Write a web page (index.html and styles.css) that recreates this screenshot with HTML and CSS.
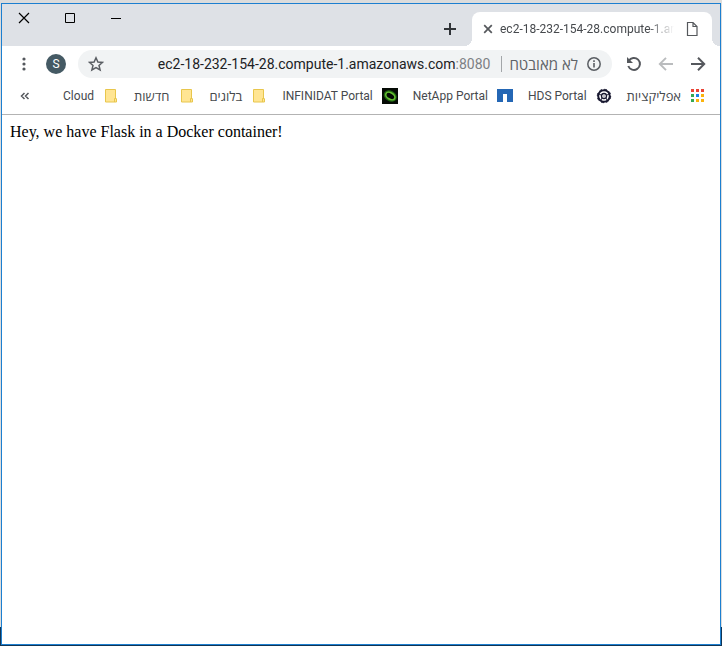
FILE: index.html
```html
<!DOCTYPE html>
<html lang="en">
<head>
<meta charset="utf-8">
<title>ec2-18-232-154-28.compute-1.amazonaws.com:8080</title>
<link rel="stylesheet" href="styles.css">
</head>
<body>
<div class="window">
  <header class="titlebar">
    <div class="window-controls">
      <button type="button" aria-label="Close"><svg width="12" height="12" viewBox="0 0 12 12"><path d="M1 1l10 10M11 1L1 11" stroke="#000" stroke-width="1.2"/></svg></button>
      <button type="button" aria-label="Maximize"><svg width="12" height="12" viewBox="0 0 12 12"><path d="M1.5 1.5h9v9h-9z" fill="none" stroke="#000"/></svg></button>
      <button type="button" aria-label="Minimize"><svg width="12" height="12" viewBox="0 0 12 12"><path d="M1 6.5h10" stroke="#000"/></svg></button>
    </div>
    <div class="tabs">
      <button type="button" class="new-tab" aria-label="New tab"><svg width="14" height="14" viewBox="0 0 14 14"><path d="M7 1v12M1 7h12" stroke="#303438" stroke-width="2"/></svg></button>
      <div class="tab">
        <button type="button" class="tab-close" aria-label="Close tab"><svg width="10" height="10" viewBox="0 0 10 10"><path d="M1.200 1.200l7.600 7.600M8.800 1.200l-7.600 7.600" stroke="#55585c" stroke-width="1.7"/></svg></button>
        <span class="tab-title">ec2-18-232-154-28.compute-1.amazonaws.com</span>
        <svg width="12" height="16" viewBox="0 0 12 16"><path d="M1.5 1.5h5.500l4 4v9h-9.500zM7 1.500v4h4" fill="none" stroke="#55585c" stroke-width="1.200"/></svg>
      </div>
    </div>
  </header>
  <nav class="toolbar">
    <button type="button" class="tool menu" aria-label="Menu"><svg width="4" height="14" viewBox="0 0 4 14" fill="#55585d"><circle cx="2" cy="2" r="1.600"/><circle cx="2" cy="7" r="1.600"/><circle cx="2" cy="12" r="1.600"/></svg></button>
    <button type="button" class="avatar" aria-label="Profile">S</button>
    <div class="omnibox">
      <button type="button" class="tool" aria-label="Bookmark this page"><svg width="16" height="16" viewBox="0 0 16 16"><path d="M8 1.800l1.900 4.200 4.600.4-3.500 3 1.100 4.500L8 11.500l-4.100 2.400L5 9.400l-3.500-3 4.600-.4z" fill="none" stroke="#5a5e63" stroke-width="1.500"/></svg></button>
      <input class="host" type="text" aria-label="Address" value="ec2-18-232-154-28.compute-1.amazonaws.com"><span class="port">:8080</span>
      <span class="divider"></span>
      <span class="security" lang="he" dir="rtl">לא מאובטח</span>
      <button type="button" class="tool" aria-label="Site information"><svg width="16" height="16" viewBox="0 0 16 16"><circle cx="8" cy="8" r="6.200" fill="none" stroke="#5a5e63" stroke-width="1.500"/><path d="M8 7v4.500M8 4.300v1.600" stroke="#5a5e63" stroke-width="1.600"/></svg></button>
    </div>
    <div class="navigation">
      <button type="button" class="tool" aria-label="Reload"><svg width="16" height="16" viewBox="0 0 16 16"><path d="M2.800 4.800A6 6 0 1 1 2.300 10" fill="none" stroke="#55585d" stroke-width="2"/><path d="M1 1v6h6z" fill="#55585d"/></svg></button>
      <button type="button" class="tool" aria-label="Forward" disabled><svg width="16" height="16" viewBox="0 0 16 16"><path d="M15 8H2.500M8 1.800L1.800 8 8 14.200" fill="none" stroke="#babcbe" stroke-width="1.900"/></svg></button>
      <button type="button" class="tool" aria-label="Back"><svg width="16" height="16" viewBox="0 0 16 16"><path d="M1 8h12.500M8 1.800L14.200 8 8 14.200" fill="none" stroke="#55585d" stroke-width="2"/></svg></button>
    </div>
  </nav>
  <nav class="bookmarks">
    <button type="button" class="tool more" aria-label="More bookmarks"><svg width="10" height="8" viewBox="0 0 10 8"><path d="M4.500 1L1.500 4l3 3M8.500 1l-3 3 3 3" fill="none" stroke="#55585d" stroke-width="1.500"/></svg></button>
    <a href="#">Cloud <svg width="16" height="16" viewBox="0 0 16 16"><path d="M2.500 1.500h10v9l1 .5v3h-11z" fill="#ffe593" stroke="#e8c64c"/><path d="M11.500 14v-3.500h2" fill="none" stroke="#e8c64c"/></svg></a>
    <a href="#" lang="he">חדשות <svg width="16" height="16" viewBox="0 0 16 16"><path d="M2.500 1.500h10v9l1 .5v3h-11z" fill="#ffe593" stroke="#e8c64c"/><path d="M11.500 14v-3.500h2" fill="none" stroke="#e8c64c"/></svg></a>
    <a href="#" lang="he">בלוגים <svg width="16" height="16" viewBox="0 0 16 16"><path d="M2.500 1.500h10v9l1 .5v3h-11z" fill="#ffe593" stroke="#e8c64c"/><path d="M11.500 14v-3.500h2" fill="none" stroke="#e8c64c"/></svg></a>
    <a href="#">INFINIDAT Portal <svg width="16" height="16" viewBox="0 0 16 16"><path d="M0 0h16v16H0z" fill="#050a05"/><ellipse cx="8.300" cy="8" rx="5.600" ry="3.900" transform="rotate(30 8.300 8)" fill="none" stroke="#1f6512" stroke-width="2.600"/><ellipse cx="8.300" cy="8" rx="5" ry="3.200" transform="rotate(30 8.300 8)" fill="none" stroke="#67bf32" stroke-width="1.500"/></svg></a>
    <a href="#">NetApp Portal <svg width="16" height="16" viewBox="0 0 16 16"><path d="M0 1h16v13h-6V6H6v8H0z" fill="#2467b5"/></svg></a>
    <a href="#">HDS Portal <svg width="16" height="16" viewBox="0 0 16 16" fill="none" stroke="#17172f"><circle cx="8" cy="8" r="5.800" stroke-width="2"/><circle cx="8" cy="8" r="6.700" stroke-width="1" stroke-dasharray="3 2.260"/><circle cx="8" cy="8" r="2.500" stroke-width="1.300"/><path d="M8 7.500v1M5 12l1-2M11 12l-1-2M3 6l2 1M13 6l-2 1"/></svg></a>
    <a href="#" lang="he">אפליקציות <svg width="16" height="16" viewBox="0 0 16 16"><path d="M1 1h3v3H1zM6 1h3v3H6zM11 1h3v3h-3z" fill="#ea4335"/><path d="M1 6h3v3H1zM1 11h3v3H1z" fill="#34a853"/><path d="M6 6h3v3H6z" fill="#1a82e8"/><path d="M11 6h3v3h-3zM6 11h3v3H6zM11 11h3v3h-3z" fill="#fbb30b"/></svg></a>
  </nav>
  <main>Hey, we have Flask in a Docker container!</main>
</div>
</body>
</html>
```
FILE: styles.css
```css
* { box-sizing: border-box; }

body {
  margin: 0;
  padding: 3px 1px 1px;
  min-height: 100vh;
  display: flex;
  background: linear-gradient(#dcdcdc 0 97%, #123554 97%);
  font-family: Roboto, "Open Sans", "Liberation Sans", sans-serif;
  font-size: 12px;
  color: #46494d;
}

.window {
  flex: 1;
  min-width: 0;
  display: flex;
  flex-direction: column;
  border: 1px solid #1c7fd0;
  background: #fff;
}

button {
  border: 0;
  padding: 0;
  background: none;
  display: flex;
  align-items: center;
  justify-content: center;
}

svg { display: block; flex: none; }

.titlebar {
  display: flex;
  justify-content: space-between;
  height: 42px;
  padding-right: 8px;
  background: #dee1e6;
}

.window-controls { display: flex; height: 28px; }
.window-controls button { width: 46px; padding-right: 2px; }

.tabs { display: flex; align-items: flex-end; }
.new-tab { width: 28px; height: 34px; margin-right: 8px; }

.tab {
  position: relative;
  display: flex;
  align-items: center;
  width: 240px;
  height: 34px;
  padding: 0 14px 0 11px;
  border-radius: 8px 8px 0 0;
  background: #fff;
}

.tab::before,
.tab::after {
  content: "";
  position: absolute;
  bottom: 0;
  width: 8px;
  height: 8px;
}
.tab::before { right: 100%; background: radial-gradient(circle at 0 0, transparent 8px, #fff 8px); }
.tab::after { left: 100%; background: radial-gradient(circle at 100% 0, transparent 8px, #fff 8px); }

.tab-title {
  flex: 1;
  min-width: 0;
  margin: 0 12px 0 7px;
  overflow: hidden;
  white-space: nowrap;
  mask-image: linear-gradient(to right, #000 85%, transparent);
}

.toolbar {
  display: flex;
  align-items: center;
  height: 36px;
  padding: 0 14px 0 20px;
}

.avatar {
  width: 20px;
  height: 20px;
  margin: 0 12px 0 20px;
  border-radius: 50%;
  background: #455a64;
  color: #fff;
  font: 12px Roboto, sans-serif;
}

.omnibox {
  flex: 1;
  min-width: 0;
  display: flex;
  align-items: center;
  height: 28px;
  padding: 0 10px;
  border-radius: 14px;
  background: #f1f3f4;
  font-size: 14px;
}

.host {
  flex: 1;
  min-width: 0;
  padding: 0;
  border: 0;
  outline: 0;
  background: none;
  color: #202124;
  font: inherit;
  text-align: right;
}

.port { color: #7d8084; }
.divider { width: 1px; height: 16px; margin: 0 7px 0 11px; background: #a3a6a9; }
.security { margin-right: 8px; color: #5f6368; font-family: "Open Sans", sans-serif; font-size: 15px; }
.navigation { display: flex; gap: 16px; margin-left: 14px; }

.bookmarks {
  display: flex;
  align-items: center;
  gap: 15px;
  height: 33px;
  padding: 0 14px 4px 18px;
  border-bottom: 1px solid #b3b3b3;
}

.bookmarks .more { margin-right: auto; }

.bookmarks a {
  display: flex;
  align-items: center;
  gap: 9px;
  color: inherit;
  text-decoration: none;
  white-space: nowrap;
}

.bookmarks a:lang(he) { font-family: "Open Sans", sans-serif; font-size: 13px; }

main {
  flex: 1;
  padding: 8px;
  color: #000;
  font: 16px "Liberation Serif", serif;
}
```
